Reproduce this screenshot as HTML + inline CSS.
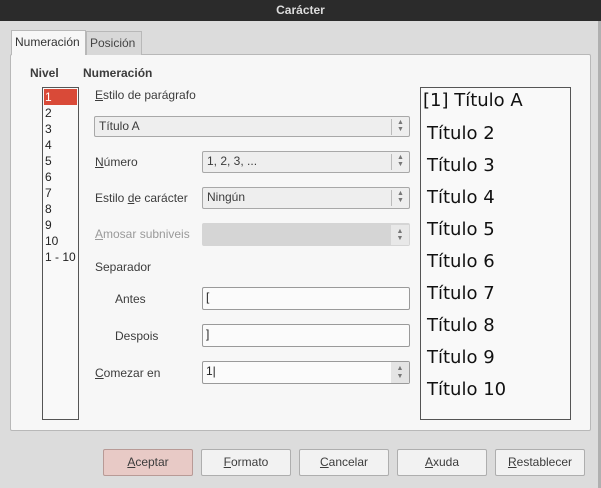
<!DOCTYPE html><html><head><meta charset="utf-8"><style>
*{box-sizing:border-box}body{margin:0;width:601px;height:488px;background:#dcdcdc;font-family:"Liberation Sans","DejaVu Sans",sans-serif;font-size:12px;color:#3c3c3c;position:relative;overflow:hidden}
.a{position:absolute}
.title{left:0;top:0;width:601px;height:21px;background:#2b2b2b;color:#dcdcdc;font-weight:bold;text-align:center;line-height:20px;font-size:12px}
.panel{left:10px;top:54px;width:581px;height:377px;background:#f7f7f7;border:1px solid #b8b8b8;border-radius:2px}
.tab{height:24px;border:1px solid #b8b8b8;border-bottom:none;line-height:22px;padding-left:3px;font-size:12px}
.box{background:#f9f9f9;border:1px solid #555}
.combo{background:#eeeeee;border:1px solid #a8a8a8;border-radius:2px;padding-left:4px;line-height:19px;font-size:12px}
.combo .s{position:absolute;right:0;top:2px;width:18px;height:16px;border-left:1px solid #bbb;font-size:7px;line-height:7px;text-align:center;color:#777}
.inp{background:#fbfbfb;border:1px solid #9a9a9a;border-radius:2px;padding-left:3px;line-height:19px;font-size:12px;color:#222}
.btn{top:449px;width:90px;height:27px;border:1px solid #aeaeae;border-radius:2px;background:#f2f2f2;text-align:center;line-height:25px;font-size:12px}
.lv{left:45px;font-size:12px;color:#222}
.pv{left:427px;font-size:18px;color:#111;font-family:"DejaVu Sans",sans-serif}
u{text-decoration:underline}
</style></head><body>
<div class="a title">Carácter</div>
<div class="a panel"></div>
<div class="a tab" style="left:11px;top:30px;width:75px;height:25px;background:#f7f7f7;color:#333">Numeración</div>
<div class="a tab" style="left:86px;top:31px;width:56px;background:#d8d8d8;color:#444">Posición</div>
<div class="a" style="left:30px;top:66px;font-weight:bold">Nivel</div>
<div class="a" style="left:83px;top:66px;font-weight:bold">Numeración</div>
<div class="a box" style="left:42px;top:87px;width:37px;height:333px"></div>
<div class="a" style="left:44px;top:89px;width:33px;height:16px;background:#d94a38"></div>
<div class="a lv" style="top:90px;color:#fff">1</div>
<div class="a lv" style="top:106px">2</div><div class="a lv" style="top:122px">3</div><div class="a lv" style="top:138px">4</div><div class="a lv" style="top:154px">5</div><div class="a lv" style="top:170px">6</div><div class="a lv" style="top:186px">7</div><div class="a lv" style="top:202px">8</div><div class="a lv" style="top:218px">9</div><div class="a lv" style="top:234px">10</div><div class="a lv" style="top:250px">1 - 10</div>
<div class="a" style="left:95px;top:88px"><u>E</u>stilo de parágrafo</div>
<div class="a combo" style="left:94px;top:116px;width:316px;height:21px">Título A<div class="s">▲<br>▼</div></div>
<div class="a" style="left:95px;top:155px"><u>N</u>úmero</div>
<div class="a combo" style="left:202px;top:151px;width:208px;height:22px">1, 2, 3, ...<div class="s">▲<br>▼</div></div>
<div class="a" style="left:95px;top:191px">Estilo <u>d</u>e carácter</div>
<div class="a combo" style="left:202px;top:187px;width:208px;height:22px">Ningún<div class="s">▲<br>▼</div></div>
<div class="a" style="left:95px;top:227px;color:#9a9a9a"><u>A</u>mosar subniveis</div>
<div class="a combo" style="left:202px;top:223px;width:208px;height:23px;background:#d5d5d5;border-color:#d5d5d5"><div class="s" style="background:#e8e8e8;border:none;top:1px;height:20px;padding-top:3px">▲<br>▼</div></div>
<div class="a" style="left:95px;top:260px">Separador</div>
<div class="a" style="left:115px;top:292px">Antes</div>
<div class="a inp" style="left:202px;top:287px;width:208px;height:23px">[</div>
<div class="a" style="left:115px;top:329px">Despois</div>
<div class="a inp" style="left:202px;top:324px;width:208px;height:23px">]</div>
<div class="a" style="left:95px;top:366px"><u>C</u>omezar en</div>
<div class="a inp" style="left:202px;top:361px;width:208px;height:23px">1|<div class="s" style="position:absolute;right:0;top:0;width:18px;height:21px;background:#e4e4e4;font-size:7px;line-height:8px;text-align:center;color:#777;padding-top:3px">▲<br>▼</div></div>
<div class="a box" style="left:420px;top:87px;width:151px;height:333px"></div>
<div class="a pv" style="left:423px;top:90px">[1] Título A</div>
<div class="a pv" style="top:123px">Título 2</div><div class="a pv" style="top:155px">Título 3</div><div class="a pv" style="top:187px">Título 4</div><div class="a pv" style="top:219px">Título 5</div><div class="a pv" style="top:251px">Título 6</div><div class="a pv" style="top:283px">Título 7</div><div class="a pv" style="top:315px">Título 8</div><div class="a pv" style="top:347px">Título 9</div><div class="a pv" style="top:379px">Título 10</div>
<div class="a btn" style="left:103px;background:#e8cac6;border-color:#b89a96"><u>A</u>ceptar</div>
<div class="a btn" style="left:201px"><u>F</u>ormato</div>
<div class="a btn" style="left:299px"><u>C</u>ancelar</div>
<div class="a btn" style="left:397px"><u>A</u>xuda</div>
<div class="a btn" style="left:495px"><u>R</u>establecer</div>
<div class="a" style="left:598px;top:21px;width:3px;height:467px;background:#b0b0b0"></div>
</body></html>
